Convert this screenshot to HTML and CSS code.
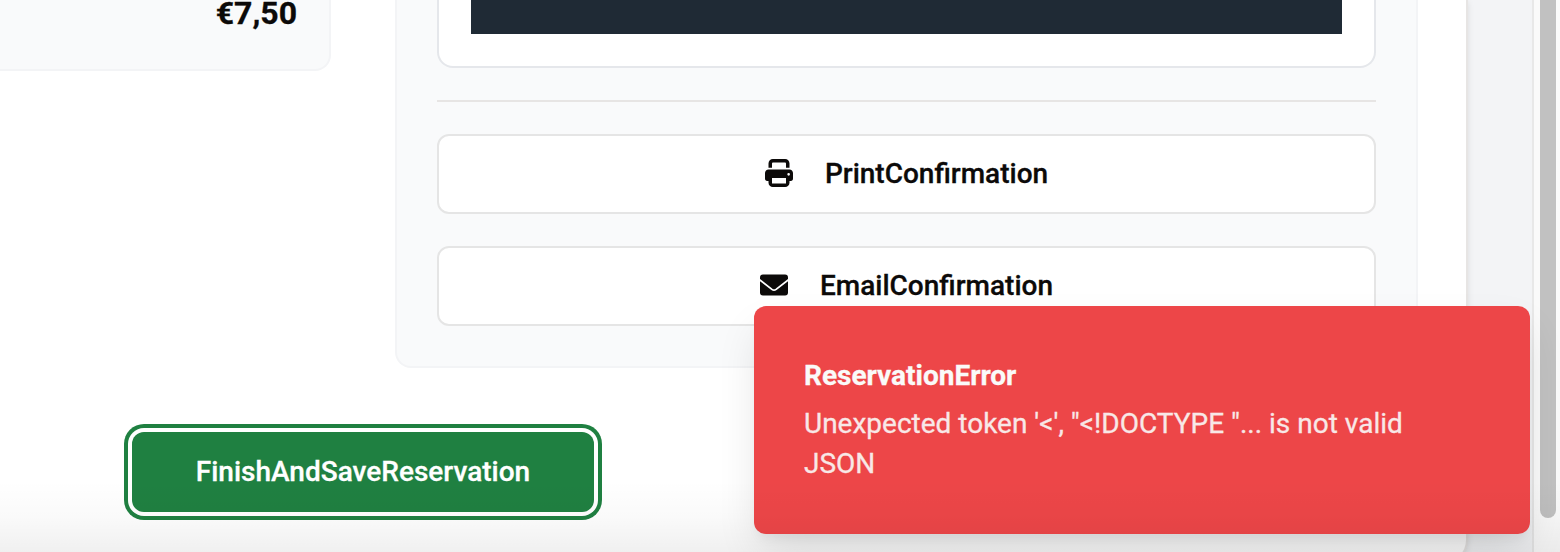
FILE: index.html
```html
<!DOCTYPE html>
<html lang="en">
<head>
<meta charset="utf-8">
<title>Reservation</title>
<link rel="stylesheet" href="styles.css">
</head>
<body>
<div class="app">
  <main class="viewport">
    <section class="card">
      <div class="columns">
        <div class="summary"><strong class="price">€7,50</strong></div>
        <div class="panel">
          <div class="preview"><div class="preview-image"></div></div>
          <hr class="divider">
          <div class="actions">
            <button class="action">
              <svg class="icon" viewBox="0 0 512 512"><path fill-rule="evenodd" d="M144 0C100 0 64 36 64 80v82h64V80c0-9 7-16 16-16h224c9 0 16 7 16 16v82h64V80c0-44-36-80-80-80H144zM64 194c-35 0-64 29-64 64v100c0 24 14 42 32 42h32v32c0 44 36 80 80 80h224c44 0 80-36 80-80v-32h32c18 0 32-18 32-42V258c0-35-29-64-64-64H64zm368 62a24 24 0 1 1 0 48 24 24 0 1 1 0-48zM128 346h256v104H128V346z"/></svg>
              <span>PrintConfirmation</span>
            </button>
            <button class="action">
              <svg class="icon" viewBox="0 0 512 512"><rect y="64" width="512" height="384" rx="54"/><path class="fold" d="M-10 158L218 336Q256 364 294 336L522 158"/></svg>
              <span>EmailConfirmation</span>
            </button>
          </div>
        </div>
      </div>
      <div class="footer"><button class="finish">FinishAndSaveReservation</button></div>
    </section>
  </main>
  <div class="scroll-track"><div class="scroll-thumb"></div></div>
</div>
<div class="toast" role="alert">
  <div class="toast-title">ReservationError</div>
  <div class="toast-text">Unexpected token '&lt;', "&lt;!DOCTYPE "... is not valid JSON</div>
</div>
<div class="edge-shade"></div>
</body>
</html>
```
FILE: styles.css
```css
* { box-sizing: border-box; }
body {
  margin: 0;
  height: 552px;
  overflow: hidden;
  font-family: Roboto, "Liberation Sans", sans-serif;
  font-size: 28px;
  line-height: 40px;
  color: #0c0a09;
  -webkit-text-stroke: 0.3px currentColor;
}
.app { display: flex; height: 552px; }
.viewport { width: 1532px; background: #f3f4f6; }
.card {
  width: 1468px;
  height: 564px;
  background: #fff;
  border-right: 2px solid #e7e5e4;
  border-bottom: 2px solid #e7e5e4;
  border-bottom-right-radius: 24px;
  box-shadow: 0 2px 6px rgba(0, 0, 0, 0.1);
}
.columns {
  display: grid;
  grid-template-columns: 331px 1023px;
  column-gap: 64px;
  align-items: start;
}
.summary {
  height: 71px;
  padding-right: 32px;
  text-align: right;
  background: #f9fafb;
  border: 2px solid #f3f4f6;
  border-width: 0 2px 2px 0;
  border-bottom-right-radius: 16px;
}
.price {
  display: block;
  font-size: 32px;
  line-height: 26px;
  font-weight: 700;
}
.panel {
  height: 368px;
  padding: 0 40px;
  background: #f9fafb;
  border: 2px solid #f3f4f6;
  border-top: 0;
  border-radius: 0 0 16px 16px;
}
.preview {
  height: 68px;
  padding: 0 32px;
  background: #fff;
  border: 2px solid #e5e7eb;
  border-top: 0;
  border-radius: 0 0 16px 16px;
}
.preview-image { height: 34px; background: #1f2a35; }
.divider {
  height: 2px;
  margin: 32px 0;
  border: 0;
  background: #e7e5e4;
}
.actions { display: grid; gap: 32px; }
.action {
  display: flex;
  align-items: center;
  justify-content: center;
  gap: 32px;
  height: 80px;
  padding: 0;
  background: #fff;
  border: 2px solid #e5e5e5;
  border-radius: 12px;
  font: 500 28px/40px Roboto, "Liberation Sans", sans-serif;
  color: #0c0a09;
}
.icon { width: 28px; height: 28px; margin-bottom: 2px; fill: currentColor; }
.fold { fill: none; stroke: #fff; stroke-width: 34px; }
.footer { padding: 64px 0 0 132px; }
.finish {
  display: block;
  width: 462px;
  height: 80px;
  padding: 0;
  border: 0;
  border-radius: 12px;
  background: #1f8041;
  box-shadow: 0 0 0 4px #fff, 0 0 0 8px #1f8041;
  font: 500 28px/40px Roboto, "Liberation Sans", sans-serif;
  color: #fff;
}
.scroll-track {
  width: 28px;
  padding-left: 6px;
  background: #fafafa;
  border-left: 2px solid #e8e8e8;
}
.scroll-thumb {
  width: 16px;
  height: 518px;
  background: #c1c1c1;
  border-radius: 0 0 8px 8px;
}
.toast {
  position: absolute;
  right: 30px;
  bottom: 18px;
  width: 776px;
  height: 228px;
  padding: 50px 64px 50px 50px;
  background: #ed4648;
  border-radius: 12px;
  box-shadow: 0 20px 44px -6px rgba(0, 0, 0, 0.12), 0 8px 12px -4px rgba(0, 0, 0, 0.06);
  color: #fafaf9;
}
.toast-title { font-weight: 700; }
.toast-text { margin-top: 8px; opacity: 0.9; }
.edge-shade {
  position: absolute;
  right: 0;
  bottom: 0;
  left: 0;
  height: 72px;
  background: linear-gradient(rgba(0, 0, 0, 0), rgba(0, 0, 0, 0.02) 50%, rgba(0, 0, 0, 0.06));
}
```
